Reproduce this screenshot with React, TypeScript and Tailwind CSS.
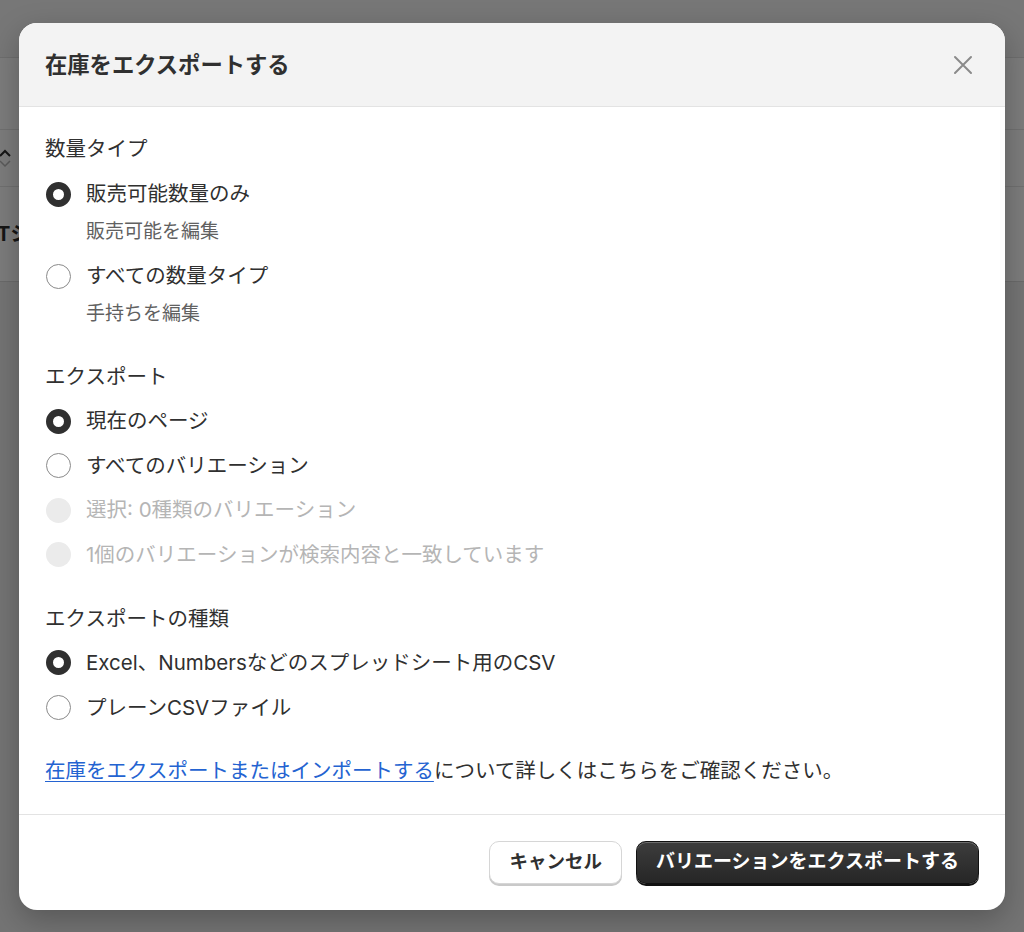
import React from "react";

const font = { fontFamily: '"Inter", "Noto Sans CJK JP", sans-serif' };

function Radio({ state }: { state: "on" | "off" | "disabled" }) {
  if (state === "on")
    return <span className="block w-[25px] h-[25px] rounded-full border-[7px] border-[#303030] bg-white shrink-0" />;
  if (state === "disabled")
    return <span className="block w-[25px] h-[25px] rounded-full bg-[#ebebeb] shrink-0" />;
  return <span className="block w-[25px] h-[25px] rounded-full border border-[#8a8a8a] bg-white shrink-0" />;
}

function Option({
  state,
  label,
  desc,
}: {
  state: "on" | "off" | "disabled";
  label: string;
  desc?: string;
}) {
  return (
    <div className="flex flex-col">
      <div className="flex items-center h-[28px] pl-[1px]">
        <Radio state={state} />
        <span
          className={
            "ml-[15px] text-[20.5px] leading-[28px] " +
            (state === "disabled" ? "text-[#b5b5b5]" : "text-[#303030]")
          }
        >
          {label}
        </span>
      </div>
      {desc && (
        <div className="mt-[10px] pl-[41px] text-[19px] leading-[28px] text-[#616161]">{desc}</div>
      )}
    </div>
  );
}

export default function App() {
  return (
    <div className="relative w-[1024px] h-[932px] overflow-hidden bg-[#747474]" style={font}>
      {/* dimmed background page */}
      <div className="flex flex-col">
        <div className="h-[58px] bg-[#777777] border-b border-[#6e6e6e]" />
        <div className="h-[72px] bg-[#7c7c7c] border-b border-[#707070]" />
        <div className="h-[57px] bg-[#7c7c7c] border-b border-[#707070] flex items-center">
          <svg width="14" height="24" viewBox="0 0 14 24" className="ml-[-2px]">
            <path d="M2 10 L7 5 L12 10" fill="none" stroke="#151515" strokeWidth="2" />
            <path d="M2 15 L7 20 L12 15" fill="none" stroke="#5a5a5a" strokeWidth="1.5" />
          </svg>
        </div>
        <div className="h-[95px] bg-[#7c7c7c] border-b border-[#6a6a6a] flex items-center">
          <span className="ml-[-3px] text-[20px] font-bold text-[#151515]">Tシャツ</span>
        </div>
      </div>

      {/* modal overlay */}
      <div className="absolute inset-0 flex items-start justify-center pt-[23px]">
        <div className="w-[986px] bg-white rounded-[18px] overflow-hidden shadow-[0_10px_30px_rgba(0,0,0,0.25)] flex flex-col">
          {/* header */}
          <div className="h-[84px] bg-[#f3f3f3] border-b border-[#e3e3e3] flex items-center justify-between px-[26px]">
            <h1 className="text-[22.3px] font-bold text-[#303030] leading-[30px]">在庫をエクスポートする</h1>
            <svg width="20" height="20" viewBox="0 0 20 20" className="mr-[6px]">
              <path d="M2 2 L18 18 M18 2 L2 18" stroke="#8a8a8a" strokeWidth="2" strokeLinecap="round" />
            </svg>
          </div>

          {/* body */}
          <div className="px-[26px] pt-[28px] pb-[29px] flex flex-col">
            <div className="text-[20.5px] leading-[28px] text-[#303030]">数量タイプ</div>
            <div className="mt-[17px] flex flex-col gap-[16px]">
              <Option state="on" label="販売可能数量のみ" desc="販売可能を編集" />
              <Option state="off" label="すべての数量タイプ" desc="手持ちを編集" />
            </div>

            <div className="mt-[35px] text-[20.5px] leading-[28px] text-[#303030]">エクスポート</div>
            <div className="mt-[16px] flex flex-col gap-[16.5px]">
              <Option state="on" label="現在のページ" />
              <Option state="off" label="すべてのバリエーション" />
              <Option state="disabled" label="選択: 0種類のバリエーション" />
              <Option state="disabled" label="1個のバリエーションが検索内容と一致しています" />
            </div>

            <div className="mt-[36px] text-[20.5px] leading-[28px] text-[#303030]">エクスポートの種類</div>
            <div className="mt-[16px] flex flex-col gap-[17px]">
              <Option state="on" label="Excel、Numbersなどのスプレッドシート用のCSV" />
              <Option state="off" label="プレーンCSVファイル" />
            </div>

            <p className="mt-[35px] text-[20.5px] leading-[28px] text-[#303030]">
              <a className="text-[#2463d1] underline underline-offset-[3px] decoration-[1px]">
                在庫をエクスポートまたはインポートする
              </a>
              について詳しくはこちらをご確認ください。
            </p>
          </div>

          {/* footer */}
          <div className="border-t border-[#e3e3e3] px-[26px] pt-[26px] pb-[26px] flex justify-end gap-[14px]">
            <button className="h-[43px] px-[19px] rounded-[10px] bg-white border border-[#d6d6d6] shadow-[0_2px_0_#c9c9c9] text-[18.5px] font-bold text-[#303030]">
              キャンセル
            </button>
            <button className="h-[43px] px-[19px] rounded-[10px] bg-gradient-to-b from-[#3d3d3d] to-[#262626] border border-[#111111] shadow-[inset_0_1px_0_rgba(255,255,255,0.25),0_2px_0_#111] text-[19px] font-bold text-white">
              バリエーションをエクスポートする
            </button>
          </div>
        </div>
      </div>
    </div>
  );
}
